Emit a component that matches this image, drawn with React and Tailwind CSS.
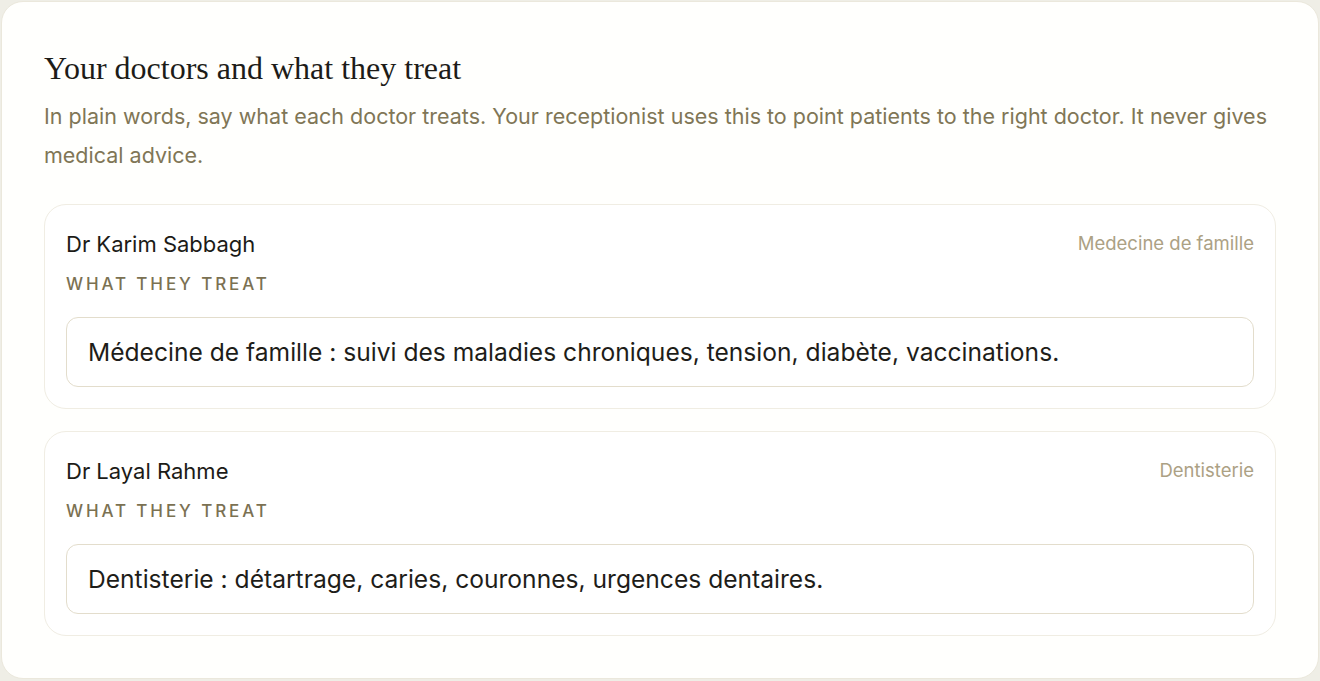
import React from 'react';

const doctors = [
  {
    name: 'Dr Karim Sabbagh',
    specialty: 'Medecine de famille',
    treats: 'Médecine de famille : suivi des maladies chroniques, tension, diabète, vaccinations.',
  },
  {
    name: 'Dr Layal Rahme',
    specialty: 'Dentisterie',
    treats: 'Dentisterie : détartrage, caries, couronnes, urgences dentaires.',
  },
];

const DoctorCard = ({ doctor }) => (
  <div className="rounded-[22px] border border-[#f0ede3] bg-white px-[21px] pt-[23px] pb-[21px]">
    <div className="flex items-center justify-between h-[32px]">
      <span className="text-[22px] text-[#1c1b17]">{doctor.name}</span>
      <span className="text-[18.5px] text-[#aca184]">{doctor.specialty}</span>
    </div>
    <div className="mt-[15px] h-[20px] flex items-center text-[17px] font-medium tracking-[0.17em] text-[#7b7152]">
      WHAT THEY TREAT
    </div>
    <div className="mt-[22px] h-[70px] rounded-[12px] border border-[#e3ddcc] bg-white px-[21px] flex items-center">
      <span className="text-[24.6px] text-[#1e1d19]">{doctor.treats}</span>
    </div>
  </div>
);

const App = () => {
  return (
    <div className="min-h-[681px] bg-[#efeee6] p-px" style={{ fontFamily: 'Inter, "Noto Sans", sans-serif' }}>
      <div className="rounded-[22px] border border-[#ebe8dc] bg-[#fffffd] px-[42px] pt-[47px] pb-[42px]">
        <h2
          className="text-[32px] leading-[38px] text-[#1d1c18]"
          style={{ fontFamily: '"Liberation Serif", "DejaVu Serif", serif' }}
        >
          Your doctors and what they treat
        </h2>
        <p className="mt-[10px] text-[21.5px] leading-[39px] text-[#807656]">
          In plain words, say what each doctor treats. Your receptionist uses this to point patients to the right doctor. It never gives medical advice.
        </p>
        <div className="mt-[29px] flex flex-col gap-[22px]">
          {doctors.map(d => (
            <DoctorCard key={d.name} doctor={d} />
          ))}
        </div>
      </div>
    </div>
  );
};

export default App;
